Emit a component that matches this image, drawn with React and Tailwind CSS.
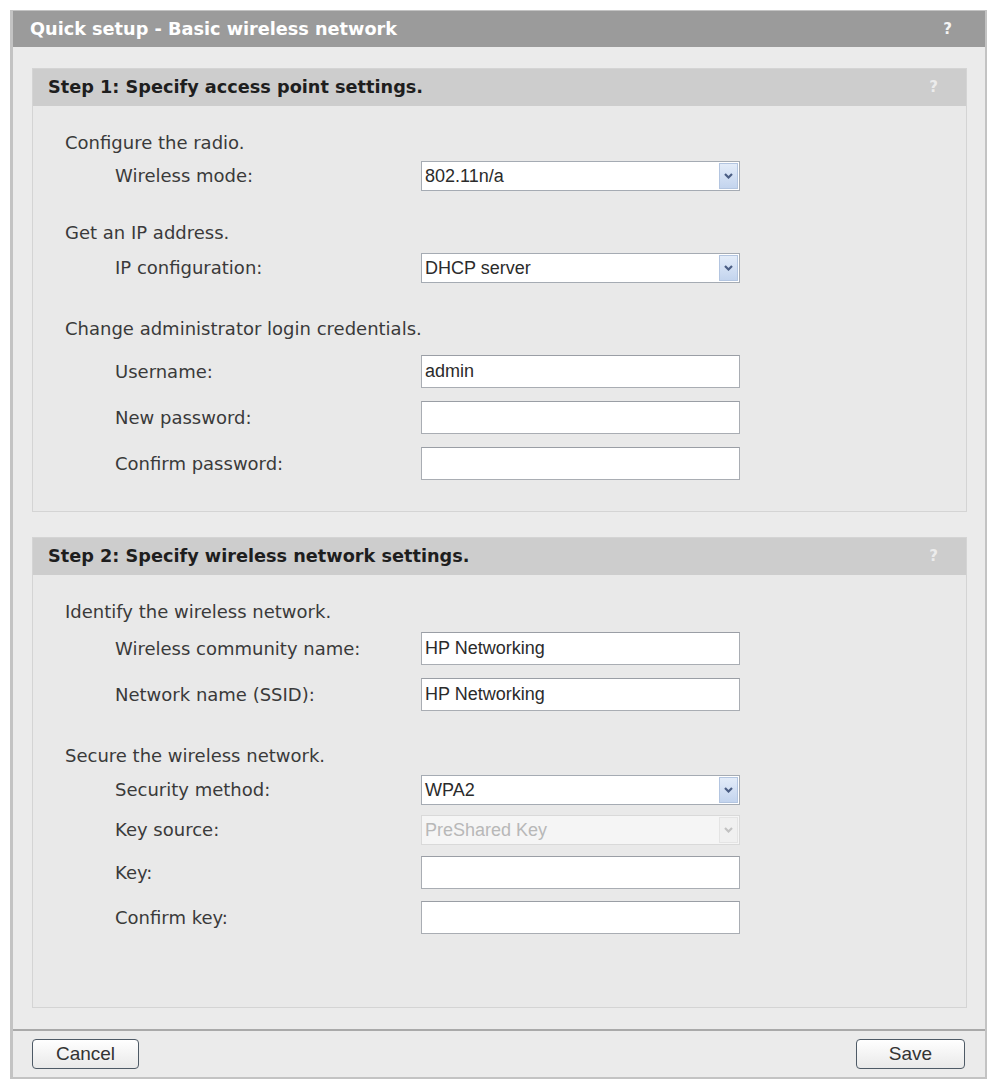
const step1 = [
  {
    title: 'Configure the radio.',
    gap: 'mt-[8px]',
    rows: [{ label: 'Wireless mode:', type: 'select', value: '802.11n/a' }],
  },
  {
    title: 'Get an IP address.',
    top: 'mt-[32px]',
    gap: 'mt-[10px]',
    rows: [{ label: 'IP configuration:', type: 'select', value: 'DHCP server' }],
  },
  {
    title: 'Change administrator login credentials.',
    top: 'mt-[36px]',
    gap: 'mt-[16px]',
    rows: [
      { label: 'Username:', type: 'input', value: 'admin' },
      { label: 'New password:', type: 'input', value: '', space: 'mt-[13px]' },
      { label: 'Confirm password:', type: 'input', value: '', space: 'mt-[13px]' },
    ],
  },
];

const step2 = [
  {
    title: 'Identify the wireless network.',
    gap: 'mt-[10px]',
    rows: [
      { label: 'Wireless community name:', type: 'input', value: 'HP Networking' },
      { label: 'Network name (SSID):', type: 'input', value: 'HP Networking', space: 'mt-[13px]' },
    ],
  },
  {
    title: 'Secure the wireless network.',
    top: 'mt-[35px]',
    gap: 'mt-[9px]',
    rows: [
      { label: 'Security method:', type: 'select', value: 'WPA2' },
      { label: 'Key source:', type: 'select', value: 'PreShared Key', disabled: true, space: 'mt-[10px]' },
      { label: 'Key:', type: 'input', value: '', space: 'mt-[11px]' },
      { label: 'Confirm key:', type: 'input', value: '', space: 'mt-[12px]' },
    ],
  },
];

function Select({ value, disabled }) {
  return (
    <div
      className={`flex h-[30px] w-[319px] items-stretch border ${
        disabled ? 'border-[#d9d9d9] bg-[#f5f5f5]' : 'border-[#a5abb3] bg-white'
      }`}
    >
      <span
        className={`flex flex-1 items-center pl-[3px] font-['Liberation_Sans',sans-serif] text-[18px] ${
          disabled ? 'text-[#b8b8b8]' : 'text-[#2b2b2b]'
        }`}
      >
        {value}
      </span>
      <span
        className={`my-[1px] mr-[1px] flex w-[19px] items-center justify-center border ${
          disabled
            ? 'border-[#e4e4e4] bg-[#f0f0f0]'
            : 'border-[#b3c5e0] bg-linear-to-b from-[#e3ecf9] to-[#c3d4ee]'
        }`}
      >
        <svg width="9" height="6" viewBox="0 0 9 6">
          <path
            d="M1 1 L4.5 4.5 L8 1"
            fill="none"
            stroke={disabled ? '#c2c2c2' : '#4b5e84'}
            strokeWidth="2.2"
          />
        </svg>
      </span>
    </div>
  );
}

function TextBox({ value }) {
  return (
    <input
      readOnly
      defaultValue={value}
      className="h-[33px] w-[319px] border border-[#a9adb3] border-t-[#9a9ea5] bg-white pl-[3px] font-['Liberation_Sans',sans-serif] text-[18px] text-[#2b2b2b] outline-none"
    />
  );
}

function Section({ section }) {
  return (
    <div className={section.top}>
      <div className="h-[20px] leading-[20px]">{section.title}</div>
      <div className={section.gap}>
        {section.rows.map((row) => (
          <div key={row.label} className={`flex items-center ${row.space || ''}`}>
            <div className="w-[356px] pl-[50px] leading-[20px]">{row.label}</div>
            {row.type === 'select' ? (
              <Select value={row.value} disabled={row.disabled} />
            ) : (
              <TextBox value={row.value} />
            )}
          </div>
        ))}
      </div>
    </div>
  );
}

function StepPanel({ title, sections, bottom, className = '' }) {
  return (
    <div className={`border border-[#d4d4d4] bg-[#e9e9e9] ${className}`}>
      <div className="flex h-[37px] items-center justify-between bg-[#cdcdcd] pl-[15px] pr-[28px]">
        <span className="text-[17.7px] font-bold text-[#1e1e1e]">{title}</span>
        <span className="text-[15px] font-bold text-[#ececec]">?</span>
      </div>
      <div className={`pl-[32px] pt-[27px] ${bottom}`}>
        {sections.map((s) => (
          <Section key={s.title} section={s} />
        ))}
      </div>
    </div>
  );
}

export default function App() {
  return (
    <div className="min-h-screen bg-white pl-[10px] pt-[10px] font-['DejaVu_Sans',sans-serif] text-[18px] text-[#3a3a3a]">
      <div className="w-[977px] border-b-[2px] border-l-[3px] border-r-[2px] border-t border-[#c3c3c3] bg-[#ebebeb]">
        <div className="flex h-[36px] items-center justify-between bg-[#9b9b9b] pl-[17px] pr-[33px]">
          <span className="text-[17.7px] font-bold text-white">Quick setup - Basic wireless network</span>
          <span className="text-[15px] font-bold text-[#f4f4f4]">?</span>
        </div>

        <div className="pl-[19px] pr-[18px] pt-[21px]">
          <StepPanel title="Step 1: Specify access point settings." sections={step1} bottom="pb-[31px]" />
          <StepPanel
            title="Step 2: Specify wireless network settings."
            sections={step2}
            bottom="pb-[73px]"
            className="mt-[25px]"
          />
        </div>

        <div className="mt-[21px] flex justify-between border-t-2 border-[#a9a9a9] pb-[8px] pl-[19px] pr-[20px] pt-[8px]">
          <button className="h-[30px] w-[107px] rounded-[4px] border border-[#4e5a66] bg-linear-to-b from-white to-[#e9e9e9] font-['Liberation_Sans',sans-serif] text-[19px] text-[#333]">
            Cancel
          </button>
          <button className="h-[30px] w-[109px] rounded-[4px] border border-[#4e5a66] bg-linear-to-b from-white to-[#e9e9e9] font-['Liberation_Sans',sans-serif] text-[19px] text-[#333]">
            Save
          </button>
        </div>
      </div>
    </div>
  );
}
